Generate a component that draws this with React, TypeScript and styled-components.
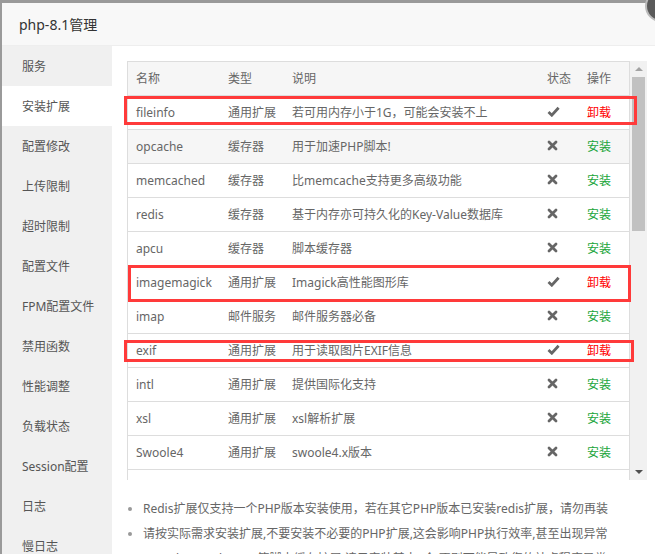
import styled, { createGlobalStyle } from "styled-components";

const GlobalStyle = createGlobalStyle`
  html, body {
    margin: 0;
    padding: 0;
    background: #9a9a9a;
    overflow: hidden;
    font-family: "Noto Sans", "Noto Sans CJK SC", sans-serif;
  }
`;

const Dialog = styled.div`
  position: relative;
  margin: 3px 0 0 2px;
  width: 700px;
  height: 560px;
  background: #fff;
`;

const CloseBtn = styled.div`
  position: absolute;
  left: 643px;
  top: -13px;
  width: 28px;
  height: 28px;
  border-radius: 50%;
  background: #5a5a5a;
  border: 2px solid #bbb;
`;

const Header = styled.div`
  height: 42px;
  line-height: 44px;
  padding-left: 17px;
  background: #f8f8f8;
  border-bottom: 1px solid #eee;
  font-size: 14px;
  color: #333;
`;

const Body = styled.div`
  display: flex;
  align-items: stretch;
  height: 520px;
`;

const Sidebar = styled.div`
  width: 110px;
  background: #f0f0f0;
`;

const NavItem = styled.div<{ $active?: boolean }>`
  height: 40px;
  line-height: 42px;
  padding-left: 20px;
  font-size: 12px;
  color: #555;
  background: ${({ $active }) => ($active ? "#fff" : "transparent")};
`;

const Content = styled.div`
  padding: 15px 0 0 15px;
`;

const TableArea = styled.div`
  position: relative;
  display: flex;
  height: 419px;
`;

const TableBox = styled.div`
  width: 501px;
  border: 1px solid #ddd;
  border-bottom: none;
  overflow: hidden;
`;

const Table = styled.table`
  width: 100%;
  border-collapse: collapse;
  table-layout: fixed;
  font-size: 12px;
  color: #666;
`;

const Th = styled.th<{ $w: number }>`
  box-sizing: border-box;
  width: ${({ $w }) => $w}px;
  height: 33px;
  padding: 0 0 0 8px;
  text-align: left;
  font-weight: normal;
  background: #f6f6f6;
  border-bottom: 1px solid #ddd;
`;

const Tr = styled.tr<{ $hover?: boolean }>`
  background: ${({ $hover }) => ($hover ? "#f6f6f6" : "#fff")};
`;

const Td = styled.td`
  height: 33px;
  padding: 0 0 0 8px;
  border-bottom: 1px solid #ddd;
  white-space: nowrap;
  overflow: hidden;
`;

const Action = styled.span<{ $installed: boolean }>`
  color: ${({ $installed }) => ($installed ? "#ff0000" : "#20a53a")};
`;

const Mark = styled.div`
  position: absolute;
  box-sizing: border-box;
  border: 3px solid #ff3a3a;
  pointer-events: none;
`;

const ScrollBar = styled.div`
  width: 17px;
  background: #f1f1f1;
  display: flex;
  flex-direction: column;
  align-items: center;
`;

const Arrow = styled.div<{ $down?: boolean }>`
  width: 0;
  height: 0;
  margin: 6px 0;
  border-left: 4px solid transparent;
  border-right: 4px solid transparent;
  ${({ $down }) =>
    $down ? "border-top: 4px solid #505050;" : "border-bottom: 4px solid #a3a3a3;"}
`;

const Thumb = styled.div`
  width: 13px;
  height: 154px;
  background: #c1c1c1;
`;

const Track = styled.div`
  flex: 1;
`;

const Notes = styled.ul`
  margin: 16px 0 0;
  padding: 0 0 0 16px;
  font-size: 12px;
  line-height: 25px;
  color: #666;
  li::marker {
    color: #999;
  }
`;

const Check = () => (
  <svg width="13" height="11" viewBox="0 0 13 11">
    <path d="M1.5 6 L4.8 9.2 L11.6 1.8" fill="none" stroke="#666" strokeWidth="2.8" />
  </svg>
);

const Cross = () => (
  <svg width="11" height="11" viewBox="0 0 11 11">
    <path d="M2 2 L9 9 M9 2 L2 9" stroke="#666" strokeWidth="2.8" strokeLinecap="round" />
  </svg>
);

const nav = [
  "服务",
  "安装扩展",
  "配置修改",
  "上传限制",
  "超时限制",
  "配置文件",
  "FPM配置文件",
  "禁用函数",
  "性能调整",
  "负载状态",
  "Session配置",
  "日志",
  "慢日志",
];

const rows: [string, string, string, boolean][] = [
  ["fileinfo", "通用扩展", "若可用内存小于1G，可能会安装不上", true],
  ["opcache", "缓存器", "用于加速PHP脚本!", false],
  ["memcached", "缓存器", "比memcache支持更多高级功能", false],
  ["redis", "缓存器", "基于内存亦可持久化的Key-Value数据库", false],
  ["apcu", "缓存器", "脚本缓存器", false],
  ["imagemagick", "通用扩展", "Imagick高性能图形库", true],
  ["imap", "邮件服务", "邮件服务器必备", false],
  ["exif", "通用扩展", "用于读取图片EXIF信息", true],
  ["intl", "通用扩展", "提供国际化支持", false],
  ["xsl", "通用扩展", "xsl解析扩展", false],
  ["Swoole4", "通用扩展", "swoole4.x版本", false],
];

// red annotation frames drawn over the table
const marks = [
  { left: -3, top: 35, width: 513, height: 29 },
  { left: 1, top: 204, width: 503, height: 37 },
  { left: -3, top: 279, width: 510, height: 22 },
];

export default function App() {
  return (
    <>
      <GlobalStyle />
      <Dialog>
        <CloseBtn />
        <Header>php-8.1管理</Header>
        <Body>
          <Sidebar>
            {nav.map((n) => (
              <NavItem key={n} $active={n === "安装扩展"}>
                {n}
              </NavItem>
            ))}
          </Sidebar>
          <Content>
            <TableArea>
              <TableBox>
                <Table>
                  <thead>
                    <tr>
                      <Th $w={92}>名称</Th>
                      <Th $w={64}>类型</Th>
                      <Th $w={255}>说明</Th>
                      <Th $w={40}>状态</Th>
                      <Th $w={50}>操作</Th>
                    </tr>
                  </thead>
                  <tbody>
                    {rows.map(([name, type, desc, installed]) => (
                      <Tr key={name} $hover={name === "opcache"}>
                        <Td>{name}</Td>
                        <Td>{type}</Td>
                        <Td>{desc}</Td>
                        <Td>{installed ? <Check /> : <Cross />}</Td>
                        <Td>
                          <Action $installed={installed}>{installed ? "卸载" : "安装"}</Action>
                        </Td>
                      </Tr>
                    ))}
                  </tbody>
                </Table>
              </TableBox>
              <ScrollBar>
                <Arrow />
                <Thumb />
                <Track />
                <Arrow $down />
              </ScrollBar>
              {marks.map((m, i) => (
                <Mark key={i} style={m} />
              ))}
            </TableArea>
            <Notes>
              <li>Redis扩展仅支持一个PHP版本安装使用，若在其它PHP版本已安装redis扩展，请勿再装</li>
              <li>请按实际需求安装扩展,不要安装不必要的PHP扩展,这会影响PHP执行效率,甚至出现异常</li>
              <li>opcache/xcache/apc等脚本缓存扩展,请只安装其中1个,否则可能导致您的站点程序异常</li>
            </Notes>
          </Content>
        </Body>
      </Dialog>
    </>
  );
}
